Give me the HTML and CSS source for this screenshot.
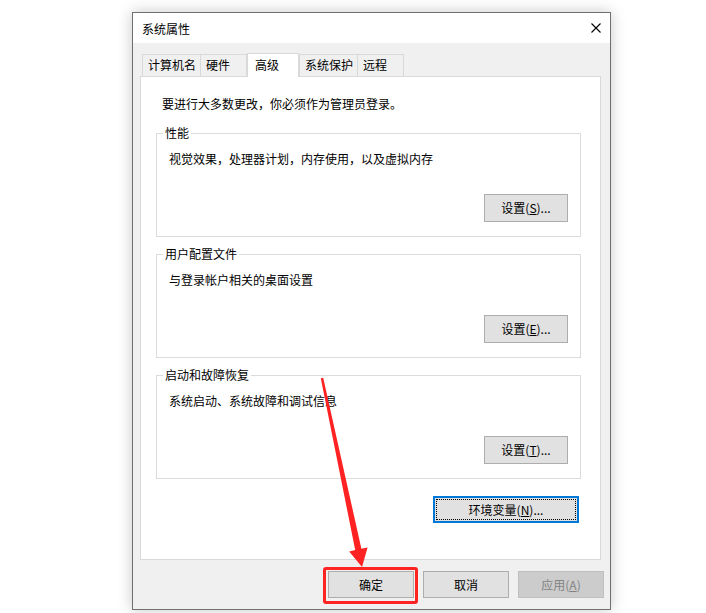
FILE: index.html
```html
<!DOCTYPE html>
<html lang="zh-CN">
<head>
    <meta charset="UTF-8">
    <meta name="viewport" content="width=device-width, initial-scale=1.0">
    <title>系统属性</title>
    <link rel="stylesheet" href="styles.css">
</head>
<body>
    <div class="dialog">
        <div class="titlebar">
            <span class="title">系统属性</span>
            <svg class="close" width="10" height="10" viewBox="0 0 10 10">
                <path d="M0.5 0.5 L9.5 9.5 M9.5 0.5 L0.5 9.5" stroke="#000" stroke-width="1.1" fill="none"/>
            </svg>
        </div>
        <div class="client">
            <div class="tabs">
                <div class="tab">计算机名</div>
                <div class="tab">硬件</div>
                <div class="tab active">高级</div>
                <div class="tab">系统保护</div>
                <div class="tab">远程</div>
            </div>
            <div class="panel">
                <p class="note">要进行大多数更改，你必须作为管理员登录。</p>

                <fieldset class="group">
                    <legend>性能</legend>
                    <p class="desc">视觉效果，处理器计划，内存使用，以及虚拟内存</p>
                    <button class="btn">设置(<u>S</u>)...</button>
                </fieldset>

                <fieldset class="group">
                    <legend>用户配置文件</legend>
                    <p class="desc">与登录帐户相关的桌面设置</p>
                    <button class="btn">设置(<u>E</u>)...</button>
                </fieldset>

                <fieldset class="group">
                    <legend>启动和故障恢复</legend>
                    <p class="desc">系统启动、系统故障和调试信息</p>
                    <button class="btn">设置(<u>T</u>)...</button>
                </fieldset>

                <div class="env-row">
                    <button class="btn btn-env">环境变量(<u>N</u>)...</button>
                </div>
            </div>
            <div class="footer">
                <button class="btn btn-wide">确定</button>
                <button class="btn btn-wide">取消</button>
                <button class="btn btn-wide" disabled>应用(<u>A</u>)</button>
            </div>
        </div>
    </div>

    <!-- annotation drawn over the screenshot -->
    <div class="mark-box"></div>
    <svg class="mark-arrow" width="706" height="613" viewBox="0 0 706 613">
        <polygon fill="#ff2222" points="320.8,378.2 323.2,377.8 361.4,548.8 367.6,547.4 362,567 349.2,551.4 355.2,550.1"/>
    </svg>
</body>
</html>
```

FILE: styles.css
```css
body {
    margin: 0;
    padding: 12px 0 0 132px;
    background: #ffffff;
    font-family: "Noto Sans CJK SC", "Liberation Sans", sans-serif;
    font-size: 12px;
    color: #000;
    position: relative;
    height: 613px;
    box-sizing: border-box;
    overflow: hidden;
}
.dialog {
    width: 479px;
    height: 598px;
    box-sizing: border-box;
    border: 1px solid #6f6f6f;
    background: #f0f0f0;
    box-shadow: 0 0 14px rgba(0, 0, 0, 0.22);
    display: flex;
    flex-direction: column;
}
.titlebar {
    height: 30px;
    background: #fff;
    display: flex;
    align-items: center;
    justify-content: space-between;
    padding: 0 9px;
    flex-shrink: 0;
}
.title {
    line-height: 16px;
    margin-top: 1px;
}
.client {
    flex: 1;
    display: flex;
    flex-direction: column;
}
.tabs {
    display: flex;
    align-items: flex-end;
    height: 23px;
    margin: 10px 0 0 9px;
    position: relative;
    z-index: 1;
}
.tab {
    height: 22px;
    box-sizing: border-box;
    min-width: 47px;
    padding: 0 4px 0 5px;
    border: 1px solid #d9d9d9;
    border-bottom: none;
    margin-right: -1px;
    background: #f0f0f0;
    line-height: 20px;
}
.tab.active {
    height: 24px;
    min-width: 52px;
    margin: 0 0 -1px 1px;
    padding-left: 7px;
    background: #fff;
    position: relative;
    z-index: 2;
    line-height: 22px;
}
.panel {
    height: 484px;
    box-sizing: border-box;
    margin: 0 9px 0 7px;
    background: #fff;
    border: 1px solid #d9d9d9;
    padding: 19px 19px 0 15px;
}
.note {
    margin: 0 0 13px 6px;
    line-height: 16px;
}
.group {
    margin: 0 0 9px;
    padding: 10px 12px 14px;
    border: 1px solid #dcdcdc;
    display: flex;
    flex-direction: column;
    min-width: 0;
}
.group legend {
    margin-left: -6px;
    padding: 0 2px;
    line-height: 16px;
}
.desc {
    margin: 0;
    line-height: 16px;
}
.group .btn {
    align-self: flex-end;
    margin-top: 27px;
}
.btn {
    font: inherit;
    color: #000;
    width: 84px;
    height: 28px;
    padding: 0;
    background: #e1e1e1;
    border: 1px solid #adadad;
    line-height: 16px;
}
.btn u {
    text-underline-offset: 1px;
}
.btn:disabled {
    background: #cccccc;
    border-color: #bfbfbf;
    color: #838383;
}
.env-row {
    display: flex;
    justify-content: flex-end;
    margin-top: 17px;
    padding-right: 2px;
}
.btn-env {
    width: 146px;
    height: 27px;
    border: 2px solid #0078d7;
    outline: 1px dotted #000;
    outline-offset: -4px;
}
.footer {
    display: flex;
    justify-content: flex-end;
    gap: 9px;
    padding: 11px 6px 0;
}
.btn-wide {
    width: 86px;
    height: 27px;
}
.mark-box {
    position: absolute;
    left: 323px;
    top: 567px;
    width: 95px;
    height: 37px;
    box-sizing: border-box;
    border: 3px solid #ff2424;
    border-radius: 3px;
}
.mark-arrow {
    position: absolute;
    left: 0;
    top: 0;
}
```
